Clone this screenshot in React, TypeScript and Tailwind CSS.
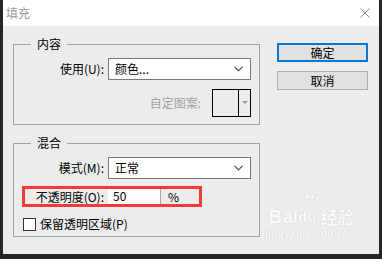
import React from "react";

const font = "font-['Noto_Sans_CJK_SC','Noto_Sans',sans-serif]";

function Chevron() {
  return (
    <svg width="9" height="6" viewBox="0 0 9 6" className="shrink-0">
      <path d="M0.5 0.8 L4.5 4.8 L8.5 0.8" fill="none" stroke="#444" strokeWidth="1.1" />
    </svg>
  );
}

function Select({ value }: { value: string }) {
  return (
    <div className="flex h-[22px] w-[143px] items-center justify-between border border-[#7a7a7a] bg-white pl-[6px] pr-[7px] text-[12px] text-black">
      <span>{value}</span>
      <Chevron />
    </div>
  );
}

function Group({ title, h, children }: { title: string; h: string; children: React.ReactNode }) {
  return (
    <div className={`relative w-[247px] border border-[#a0a0a0] ${h}`}>
      <span className="absolute left-[17px] top-[-9px] bg-[#ececec] px-[6px] text-[12px] leading-[16px] text-black">
        {title}
      </span>
      {children}
    </div>
  );
}

function Watermark() {
  return (
    <div className="pointer-events-none absolute left-[262px] top-[205px] flex flex-col items-center text-[#fafafa] [text-shadow:0_0_1px_#bdbdbd]">
      <div className="flex items-end font-['Liberation_Sans',sans-serif] text-[19px] font-bold leading-[22px]">
        <span>Bai</span>
        <span className="relative">
          <span className="absolute left-[3px] top-[-9px] flex gap-[2px]">
            <span className="h-[4px] w-[3px] rounded-full bg-[#f6f6f6] shadow-[0_0_1px_#bdbdbd]" />
            <span className="mt-[-2px] h-[5px] w-[3px] rounded-full bg-[#f6f6f6] shadow-[0_0_1px_#bdbdbd]" />
            <span className="mt-[-2px] h-[5px] w-[3px] rounded-full bg-[#f6f6f6] shadow-[0_0_1px_#bdbdbd]" />
            <span className="h-[4px] w-[3px] rounded-full bg-[#f6f6f6] shadow-[0_0_1px_#bdbdbd]" />
          </span>
          <span className="text-[15px]">du</span>
        </span>
        <span className={`${font} ml-[4px] text-[17px]`}>经验</span>
      </div>
      <div className="font-['Liberation_Sans',sans-serif] text-[10px] font-bold leading-[12px] tracking-[0.3px]">
        jingyan.baidu.com
      </div>
    </div>
  );
}

export default function App() {
  return (
    <div className={`h-[259px] w-[382px] bg-[#262626] pl-[3px] ${font}`}>
      <div className="relative flex h-[254px] w-[376px] flex-col bg-[#ececec]">
        <div className="flex h-[26px] items-center justify-between bg-white pl-[3px] pr-[9px]">
          <span className="text-[12px] text-[#9a9a9a]">填充</span>
          <svg width="10" height="10" viewBox="0 0 10 10">
            <path d="M0.5 0.5 L9.5 9.5 M9.5 0.5 L0.5 9.5" stroke="#8a8a8a" strokeWidth="1" />
          </svg>
        </div>

        <div className="flex gap-[17px] pl-[10px]">
          <div className="flex flex-col gap-[18px] pt-[18px]">
            <Group title="内容" h="h-[81px]">
              <div className="flex flex-col items-end pr-[8px] pt-[13px]">
                <div className="flex items-center gap-[4px]">
                  <span className="w-[90px] text-right text-[12px] text-black">使用(U):</span>
                  <Select value="颜色..." />
                </div>
                <div className="mt-[9px] flex items-center gap-[11px]">
                  <span className="text-[12px] text-[#a3a3a3]">自定图案:</span>
                  <div className="flex h-[28px] w-[39px] border-[1.5px] border-black">
                    <div className="w-[26px] border-r-[1.5px] border-black" />
                    <div className="flex flex-1 items-center justify-center pb-[2px]">
                      <span className="h-0 w-0 border-x-[3px] border-t-[3px] border-x-transparent border-t-[#9a9a9a]" />
                    </div>
                  </div>
                </div>
              </div>
            </Group>

            <Group title="混合" h="h-[94px]">
              <div className="flex flex-col pt-[13px]">
                <div className="flex items-center gap-[4px]">
                  <span className="w-[90px] text-right text-[12px] text-black">模式(M):</span>
                  <Select value="正常" />
                </div>
                <div className="relative mt-[8px] flex h-[19px] items-center gap-[4px]">
                  <span className="w-[90px] text-right text-[12px] text-black">不透明度(O):</span>
                  <div className="flex h-[19px] items-stretch">
                    <div className="flex w-[52px] items-center border-b border-[#7a7a7a] bg-white pl-[5px] text-[12px] text-black">
                      50
                    </div>
                    <div className="flex w-[38px] items-center border-l border-[#a8a8a8] pl-[7px] text-[12px] text-black">
                      %
                    </div>
                  </div>
                  <div className="pointer-events-none absolute left-[8px] top-[-1px] h-[21px] w-[180px] border-[3px] border-[#f23a3a]" />
                </div>
                <div className="mt-[9px] flex items-center gap-[4px] pl-[9px]">
                  <span className="h-[13px] w-[13px] border border-[#333] bg-white" />
                  <span className="text-[12px] text-black">保留透明区域(P)</span>
                </div>
              </div>
            </Group>
          </div>

          <div className="flex flex-col gap-[9px] pt-[17px]">
            <button className="flex h-[19px] w-[91px] items-center justify-center border-2 border-[#0078d7] bg-[#e1e1e1] text-[12px] text-black">
              确定
            </button>
            <button className="flex h-[19px] w-[91px] items-center justify-center border border-[#adadad] bg-[#e1e1e1] text-[12px] text-black">
              取消
            </button>
          </div>
        </div>

        <Watermark />
      </div>
    </div>
  );
}
